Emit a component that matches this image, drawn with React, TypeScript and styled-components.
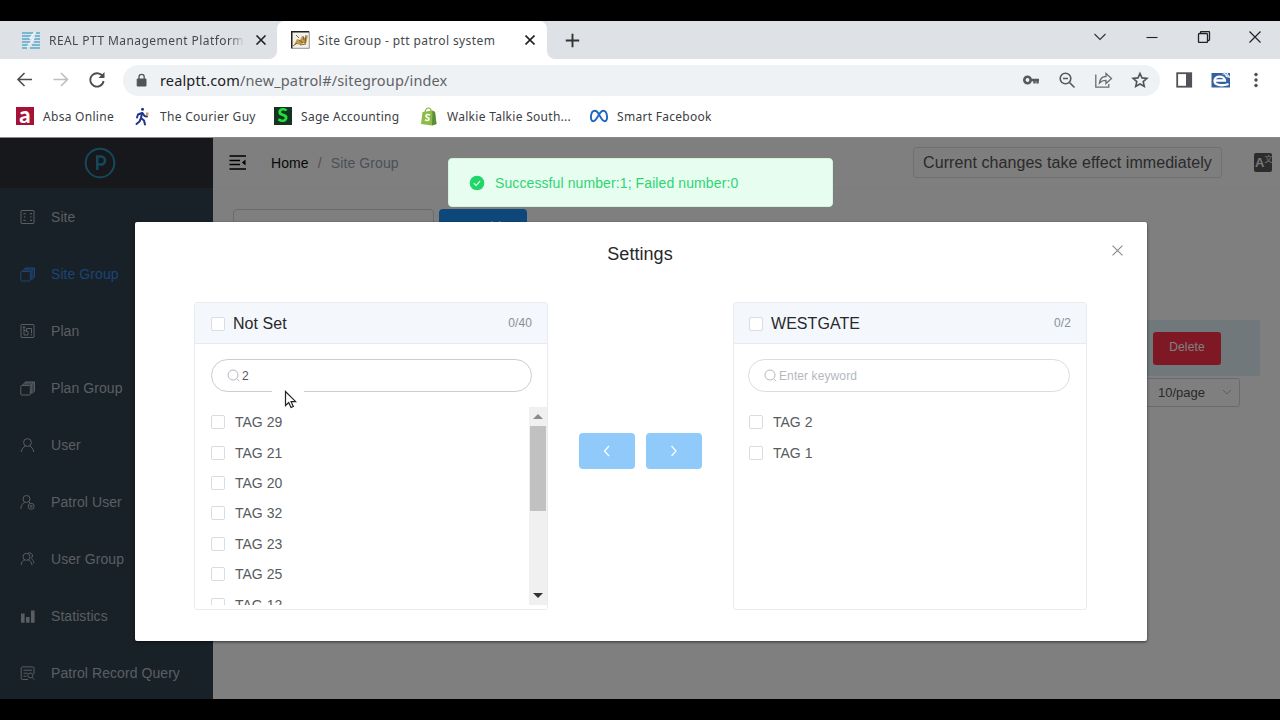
import React from "react";
import styled, { createGlobalStyle, css } from "styled-components";

const GlobalStyle = createGlobalStyle`
  * { box-sizing: border-box; }
  body { margin: 0; background: #000; font-family: "Liberation Sans", Arial, sans-serif; }
  svg { display: block; flex: none; }
`;

const Screen = styled.div`
  width: 1280px; height: 720px; background: #000; padding: 21px 0; overflow: hidden;
`;
const Browser = styled.div`
  height: 678px; display: flex; flex-direction: column; background: #fff;
  font-family: "Noto Sans", "Open Sans", sans-serif; overflow: hidden;
`;

/* ---------- browser chrome ---------- */
const TabStrip = styled.div`
  height: 38px; flex: none; display: flex; background: #fff;
`;
const Tab = styled.div<{ $active?: boolean }>`
  display: flex; align-items: center; color: #45494d;
  width: ${p => (p.$active ? 270 : 277)}px; height: 38px;
  padding-left: ${p => (p.$active ? 14 : 21)}px;
  background: ${p => (p.$active ? "#fff" : "#dee1e5")};
  border-radius: ${p => (p.$active ? "8px 8px 0 0" : "0 0 8px 0")};
`;
const ActiveBack = styled.div`
  background: linear-gradient(#dee1e5 50%, #fff 50%);
`;
const TabTitle = styled.span<{ $w: number; $fade?: boolean; $ls?: number }>`
  width: ${p => p.$w}px; margin-left: 8px; font-size: 12px; line-height: 20px; padding-top: 1px; white-space: nowrap; overflow: hidden;
  letter-spacing: ${p => p.$ls ?? 0}px;
  ${p => p.$fade && css`mask-image: linear-gradient(90deg, #000 92%, transparent);`}
`;
const StripRest = styled.div`
  flex: 1; background: #dee1e5; border-radius: 0 0 0 8px; display: flex; align-items: center; padding: 0 18px 0 18px;
`;
const WindowButtons = styled.div`
  margin-left: auto; display: flex; align-items: center; gap: 37px; padding-bottom: 6px;
`;
const Toolbar = styled.div`
  height: 42px; flex: none; display: flex; align-items: center; padding: 0 16px; 
`;
const NavButtons = styled.div`
  display: flex; align-items: center; gap: 18px; width: 107px;
`;
const AddressBar = styled.div`
  width: 1037px; height: 31px; border-radius: 16px; background: #eff2f4; display: flex; align-items: center;
  padding: 0 11px 0 11px;
`;
const Url = styled.span`
  margin-left: 11px; font-size: 14.5px; letter-spacing: 0.15px; line-height: 24px; color: #5f6368;
  b { font-weight: 400; color: #202124; }
`;
const AddressIcons = styled.div`
  margin-left: auto; display: flex; align-items: center; gap: 18px;
`;
const ToolbarEnd = styled.div`
  display: flex; align-items: center; gap: 17px; margin-left: 14px;
`;
const Bookmarks = styled.div`
  height: 36px; flex: none; display: flex; align-items: center; padding: 0 0 6px 16px; color: #3c4043;
`;
const Bookmark = styled.div<{ $w: number }>`
  display: flex; align-items: center; gap: 9px; width: ${p => p.$w}px; font-size: 12px; letter-spacing: 0.29px; line-height: 20px; white-space: nowrap;
  span + span, svg + span { padding-top: 1px; }
`;
const LetterTile = styled.span<{ $bg: string; $color: string; $size: number }>`
  width: 18px; height: 18px; background: ${p => p.$bg}; color: ${p => p.$color};
  font: 900 ${p => p.$size}px/16px "Lato", sans-serif; text-align: center;
`;

/* ---------- web page ---------- */
const Page = styled.div`
  flex: 1; position: relative; display: flex; overflow: hidden; border-top: 1px solid #8a8a8a;
  font-family: "Liberation Sans", Arial, sans-serif; background: #fff;
`;
const Sidebar = styled.nav`
  width: 213px; background: #304150; flex: none;
`;
const Logo = styled.div`
  height: 50px; background: #2d3036; display: flex; align-items: center; padding-left: 84px;
`;
const MenuItem = styled.div<{ $active?: boolean }>`
  height: 57px; display: flex; align-items: center; gap: 15px; padding: 1px 0 0 20px;
  font-size: 14px; letter-spacing: 0.07px; color: ${p => (p.$active ? "#3a88e4" : "#b4bcc5")};
`;
const Main = styled.main`
  flex: 1; display: flex; flex-direction: column;
`;
const TopBar = styled.header`
  height: 50px; display: flex; align-items: center; padding: 0 8px 0 16px; border-bottom: 1px solid #f9f9f9;
`;
const Crumbs = styled.div`
  display: flex; gap: 9px; margin-left: 24px; font-size: 14px; color: #97a0b0; letter-spacing: 0.1px;
  b { font-weight: 400; color: #111; }
`;
const Notice = styled.div`
  margin-left: auto; margin-right: 32px; height: 31px; width: 309px; border: 1px solid #e0e1e4; border-radius: 3px;
  background: #fcfcfc; font-size: 16px; letter-spacing: 0.07px; line-height: 29px; text-align: center; color: #555; white-space: nowrap;
`;
const Lang = styled.div`
  width: 18px; height: 19px; border-radius: 2px; background: #58585a; color: #eee; font-size: 13px; font-weight: 700; line-height: 20px; 
  padding-left: 1px; display: flex;
  small { font: 8px/12px "Noto Sans CJK SC", sans-serif; }
`;
const FilterRow = styled.div`
  display: flex; gap: 5px; padding: 21px 0 0 20px;
`;
const FilterInput = styled.div`
  width: 201px; height: 36px; border: 1px solid #d4d7df; border-radius: 4px; 
`;
const AddButton = styled.div`
  width: 88px; height: 36px; border-radius: 4px; background: #1c90f6; color: #fff; font-size: 14px; line-height: 36px; text-align: center;
`;
const TableRow = styled.div`
  height: 56px; margin: 75px 20px 0; background: #e0f0f8; display: flex; align-items: center; justify-content: flex-end; padding-right: 39px;
`;
const DeleteButton = styled.div`
  width: 68px; height: 33px; border-radius: 3px; background: #fd3049; color: #fff; font-size: 12px; letter-spacing: 0.15px; line-height: 31px; text-align: center;
`;
const Pager = styled.div`
  margin: 2px 40px 0 auto; width: 110px; height: 29px; border: 1px solid #d4d7df; border-radius: 3px; display: flex;
  align-items: center; justify-content: flex-end; gap: 17px; padding: 0 7px 1px 0; font-size: 13px; color: #505358;
`;
const Overlay = styled.div`
  position: absolute; inset: 0; background: rgba(0, 0, 0, 0.5);
`;
const Dialog = styled.section`
  position: absolute; left: 135px; top: 84px; width: 1012px; height: 419px; background: #fff; border-radius: 2px;
  box-shadow: 0 1px 3px rgba(0, 0, 0, 0.6);
`;
const DialogHead = styled.div`
  height: 80px; display: grid; grid-template-columns: 1fr auto 1fr; padding: 22px 24px 0 22px; font-size: 18px; letter-spacing: 0.05px; line-height: 21px; color: #26282b;
  svg { justify-self: end; grid-column: 3; margin-top: 1px; }
  span { grid-column: 2; }
`;
const Transfer = styled.div`
  display: flex; padding-left: 59px; 
`;
const Panel = styled.div`
  width: 354px; height: 308px; border: 1px solid #e8ecef; border-radius: 3px; overflow: hidden;
`;
const PanelHead = styled.div<{ $left?: number }>`
  height: 41px; background: #f4f7fb; border-bottom: 1px solid #e6ebf0; display: flex; align-items: center; padding: 1px 15px 0 ${p => p.$left ?? 16}px;
  color: #28292c; font-size: 16px; letter-spacing: 0.05px;
  small { margin-left: auto; font-size: 12px; letter-spacing: 0.1px; color: #8b8f95; padding-bottom: 2px; }
`;
const Check = styled.i<{ $gap?: number }>`
  width: 14px; height: 14px; border: 1px solid #d9dce2; border-radius: 2px; background: #fff; margin-right: ${p => p.$gap ?? 10}px; flex: none;
`;
const Search = styled.div<{ $filled?: boolean; $left?: number }>`
  margin: 15px 0 15px ${p => p.$left ?? 14}px; width: ${p => (p.$filled ? 321 : 322)}px; height: 33px; border: 1px solid ${p => (p.$filled ? "#c9cbd0" : "#d9dce1")}; border-radius: 17px;
  display: flex; align-items: center; gap: 2px; padding-left: 15px; font-size: 12px; letter-spacing: 0.1px; color: ${p => (p.$filled ? "#55585d" : "#b4b8be")};
`;
const ListArea = styled.div`
  height: 198px; display: flex; overflow: hidden; 
`;
const List = styled.div`
  flex: 1;
`;
const Item = styled.div<{ $left?: number }>`
  height: 30.4px; display: flex; align-items: center; padding-left: ${p => p.$left ?? 16}px; font-size: 14px; color: #585b60;
`;
const Scrollbar = styled.div`
  width: 18px; background: #f0f0f0; display: flex; flex-direction: column; align-items: center;
`;
const ScrollArrow = styled.div<{ $down?: boolean }>`
  height: 19px; width: 18px; display: flex; align-items: center; justify-content: center;
  &::after {
    content: ""; border: 5px solid transparent;
    ${p => p.$down ? css`border-top-color: #333; border-bottom: 0;` : css`border-bottom-color: #8c8c8c; border-top: 0;`}
  }
`;
const Thumb = styled.div`
  width: 16px; height: 85px; background: #c1c1c1; margin-bottom: auto;
`;
const Moves = styled.div`
  width: 185px; display: flex; gap: 11px; padding: 131px 0 0 31px;
`;
const MoveButton = styled.div`
  width: 56px; height: 36px; border-radius: 4px; background: #8fcafb; display: flex; align-items: center; justify-content: center;
`;
const Toast = styled.div`
  position: absolute; left: 448px; top: 20px; width: 385px; height: 49px; border: 1px solid #d3f5e0; border-radius: 4px; background: #e7fdf0;
  display: flex; align-items: center; gap: 10px; padding-left: 20px; font-size: 14px; letter-spacing: 0.1px; color: #2ed573;
`;
const Pointer = styled.div`
  position: absolute; left: 272px; top: 247px; width: 32px; height: 25px; background: #fff; padding: 5px 0 0 12px;
`;

type Kind = "site" | "group" | "plan" | "user" | "patrol" | "users" | "stats" | "record";
function MenuIcon({ kind }: { kind: Kind }) {
  const shape: Record<Kind, React.ReactNode> = {
    site: <><rect x="1" y="1.500" width="13" height="13" rx=".5" /><g fill="currentColor" stroke="none"><path d="M3.500 4h2v1.300h-2zM10 4h2v1.300h-2zM3.500 10.700h2V12h-2zM10 10.700h2V12h-2zM4 7.300h1.300v1.300H4zM10.200 7.300h1.300v1.300h-1.300z" /></g></>,
    group: <><rect x=".8" y="5.500" width="9.500" height="9.500" rx=".8" /><path d="M3 5.500V4h8.700v9h-1.400M5 4V2h9.500v9.300l-2.800 2.200M5.500 2.800h8M13 3.500v8.500M10.300 6l4-4" /></>,
    plan: <><rect x="1" y="1.500" width="13" height="13" rx=".5" /><path d="M4 3.500v8.500h4V8.500H6.500V5.500h5v5M4 7.500h2.500M10.500 12H12M3 5l1-1.500L5 5" /></>,
    user: <><circle cx="7.500" cy="5.500" r="3.900" /><path d="M1.200 15C1.700 11.800 3.700 9.700 5.500 9.100M13.800 15C13.300 11.800 11.300 9.700 9.500 9.100" /></>,
    patrol: <><circle cx="6.500" cy="5" r="3.500" /><path d="M.8 15c.2-3.500 1.800-5.800 4-6.500M9 8.300l1 .5" /><circle cx="11.200" cy="12.300" r="3" /><circle cx="11.200" cy="12.300" r="1" /></>,
    users: <><circle cx="6.500" cy="5.800" r="3.500" /><path d="M1 14c.4-3 2-4.500 3.800-5M12 14c-.4-3-2-4.500-3.800-5M8 2.200c3.500-1.400 6 2 3.300 5.200 1.500 1.200 2.500 2.800 2.600 4.800" /></>,
    stats: <g fill="currentColor" stroke="none"><path d="M1 5.500h3.600v9.300H1zM6 9h3.600v5.800H6zM11 2.500h3.600v12.300H11z" /></g>,
    record: <><path d="M14 9V3.200a1.300 1.300 0 0 0-1.300-1.300H2.500a1.300 1.300 0 0 0-1.300 1.300v10a1.300 1.300 0 0 0 1.300 1.300H8M3.500 5.200h8.500M3.500 8.200h4M3.500 11.200h3" /><circle cx="10.300" cy="10.500" r="2.500" /><path d="M12.200 12.500l2 2.200" /></>,
  };
  return <svg width="16" height="16" viewBox="0 0 16 16" fill="none" stroke="currentColor" strokeWidth="1">{shape[kind]}</svg>;
}

const Lens = () => (
  <svg width="13" height="13" viewBox="0 0 13 13" fill="none" stroke="#b4b8be" strokeWidth="1"><circle cx="6" cy="6" r="5" /><path d="M9.600 9.800l2.600 2.400" /></svg>
);
const Cross = ({ size, width = 1.5, color = "#222" }: { size: number; width?: number; color?: string }) => (
  <svg width={size} height={size} viewBox="0 0 10 10" fill="none" stroke={color} strokeWidth={(width * 10) / size}><path d="M.5.5l9 9M9.500.5l-9 9" /></svg>
);

const menu: [Kind, string][] = [
  ["site", "Site"], ["group", "Site Group"], ["plan", "Plan"], ["group", "Plan Group"], ["user", "User"],
  ["patrol", "Patrol User"], ["users", "User Group"], ["stats", "Statistics"], ["record", "Patrol Record Query"],
];
const notSet = ["TAG 29", "TAG 21", "TAG 20", "TAG 32", "TAG 23", "TAG 25", "TAG 12"];
const assigned = ["TAG 2", "TAG 1"];

export default function App() {
  return (
    <Screen>
      <GlobalStyle />
      <Browser>
        <TabStrip>
          <Tab>
            <svg width="20" height="18" viewBox="0 0 20 18" fill="none" stroke="#5aa9cc" strokeWidth="1.700">
              <path d="M1 2h11.500M15 2h4M1 5h10M14 5h5M1 8h8M13 8h6M1 11h9M13 11h6M1 14h7M11 14h8M1 17h5M9 17h10" />
              <path d="M14 1l-5 6h4l-7 9" stroke="#eef8fc" strokeWidth="1.200" />
            </svg>
            <TabTitle $w={196} $fade $ls={0.43}>REAL PTT Management Platform</TabTitle>
            <svg width="32" height="10" viewBox="0 0 32 10" stroke="#222" strokeWidth="1.600"><path d="M11.500.5l9 9M20.500.5l-9 9" /></svg>
          </Tab>
          <ActiveBack>
            <Tab $active>
              <svg width="19" height="18" viewBox="0 0 19 18">
                <rect x=".75" y=".75" width="17.500" height="16.500" fill="#f3f0ea" />
                <path d="M.75 17.500V.75h17.500" fill="none" stroke="#222" strokeWidth="1.500" /><path d="M1 17.300h17.300V1" fill="none" stroke="#777" strokeWidth=".8" />
                <path d="M3 14l3-6 3 1 2-4 2 2 4-3-1 5-1 4-3-1-3 2-3-1z" fill="#c49a45" />
                <path d="M2 15l4-3M8 9l4 3M12 5l1 4M15 4l-1 8M5 4l3 3M9 14l6-1" stroke="#5c4a2d" strokeWidth=".8" />
              </svg>
              <TabTitle $w={207} $ls={0.4}>Site Group - ptt patrol system</TabTitle>
              <Cross size={10} width={1.6} />
            </Tab>
          </ActiveBack>
          <StripRest>
            <svg width="15" height="15" viewBox="0 0 15 15" stroke="#333" strokeWidth="1.900"><path d="M7.500.8v13.400M.8 7.500h13.400" /></svg>
            <WindowButtons>
              <svg width="14" height="8" viewBox="0 0 14 8" fill="none" stroke="#333" strokeWidth="1.100"><path d="M1.500 1l5.500 5.500L12.500 1" /></svg>
              <svg width="16" height="12" viewBox="0 0 16 12" stroke="#222" strokeWidth="1.100"><path d="M2.500 6.500h11" /></svg>
              <svg width="14" height="12" viewBox="0 0 14 12" fill="none" stroke="#222" strokeWidth="1.300"><rect x="1.500" y="2.500" width="9" height="9" rx="1" /><path d="M3.500 2.500V1.500a1 1 0 0 1 1-1h7a1 1 0 0 1 1 1v7a1 1 0 0 1-1 1h-1" /></svg>
              <svg width="14" height="12" viewBox="0 0 14 12" stroke="#222" strokeWidth="1.200"><path d="M1.500.5l11 11M12.500.5l-11 11" /></svg>
            </WindowButtons>
          </StripRest>
        </TabStrip>

        <Toolbar>
          <NavButtons>
            <svg width="18" height="16" viewBox="0 0 18 16" fill="none" stroke="#4a4d51" strokeWidth="1.600"><path d="M16 7.500H2M8.500 1L2 7.500 8.500 14" /></svg>
            <svg width="18" height="16" viewBox="0 0 18 16" fill="none" stroke="#bcbfc2" strokeWidth="1.600"><path d="M1.500 7.500h14M9 1l6.500 6.500L9 14" /></svg>
            <svg width="18" height="18" viewBox="0 0 18 18" fill="none" stroke="#4a4d51" strokeWidth="1.800"><path d="M15 6A6.700 6.700 0 1 0 15.600 10" /><path d="M16.500 1v6h-6z" fill="#4a4d51" stroke="none" /></svg>
          </NavButtons>
          <AddressBar>
            <svg width="15" height="16" viewBox="0 0 15 16"><path d="M3.200 7h8.800v7H3.200z" fill="#505458" stroke="#505458" strokeLinejoin="round" strokeWidth="1" /><path d="M5 7V5a2.600 2.600 0 0 1 5.200 0v2" fill="none" stroke="#505458" strokeWidth="1.300" /></svg>
            <Url><b>realptt.com</b>/new_patrol#/sitegroup/index</Url>
            <AddressIcons>
              <svg width="18" height="18" viewBox="0 0 18 18" fill="none" stroke="#55595d"><circle cx="5.500" cy="9" r="3.200" strokeWidth="2.600" /><path d="M9 9h8M12.500 9v3.500M15.500 9v3.500" strokeWidth="2.400" /></svg>
              <svg width="18" height="18" viewBox="0 0 18 18" fill="none" stroke="#55595d" strokeWidth="1.600"><circle cx="7.500" cy="7.500" r="5.300" /><path d="M11.500 11.500l5 5M5 7.500h5" /></svg>
              <svg width="19" height="18" viewBox="0 0 19 18" fill="none" stroke="#686c70" strokeWidth="1.300"><path d="M1.800 3.500v12.700h13V13M5.500 12c.5-4 2.500-6.500 6.500-6.500v-3l5.500 5-5.500 5V9.400C9 9.400 7 10.300 5.500 12z" /></svg>
              <svg width="18" height="18" viewBox="0 0 18 18" fill="none" stroke="#505458" strokeWidth="1.600"><path d="M9 2.500l2 4.400 4.900.5-3.700 3.200 1.100 4.900L9 13l-4.300 2.500 1.100-4.900-3.700-3.200 4.900-.5z" /></svg>
            </AddressIcons>
          </AddressBar>
          <ToolbarEnd>
            <svg width="20" height="18" viewBox="0 0 20 18"><rect x="3.200" y="2.200" width="14" height="13.500" fill="none" stroke="#505458" strokeWidth="1.800" /><path d="M12 2h5.500v14H12z" fill="#505458" /></svg>
            <svg width="20" height="18" viewBox="0 0 20 18" fill="none"><path d="M.5 2h18.500v14.500H.5z" fill="#33619f" /><path d="M3.500 9.500h10.500c-.3-5-10.500-5.300-10.500.3 0 5.500 9 5 14 3.200" stroke="#fff" strokeWidth="2.300" /><path d="M11.500 3c4-.5 6 1 7 3M13 1c1 3 3 5 6 5.500M17 1l-2 5" stroke="#dbe9f7" strokeWidth="1.200" /></svg>
            <svg width="16" height="18" viewBox="0 0 16 18" fill="#4a4d51"><circle cx="8" cy="3.500" r="1.700" /><circle cx="8" cy="9" r="1.700" /><circle cx="8" cy="14.500" r="1.700" /></svg>
          </ToolbarEnd>
        </Toolbar>

        <Bookmarks>
          <Bookmark $w={117}><LetterTile $bg="#a51236" $color="#fff" $size={22}>a</LetterTile><span>Absa Online</span></Bookmark>
          <Bookmark $w={141}>
            <svg width="18" height="19" viewBox="0 0 18 19" fill="none" stroke="#24368c" strokeWidth="2" strokeLinecap="round" strokeLinejoin="round"><circle cx="9.500" cy="2.200" r="1.500" fill="#24368c" stroke="none" /><path d="M9 6l-1 5 3 2.500 1 4M8 11l-1.500 3.500L3.500 17M9 6L5 7.500 4 10.500M9.500 6l2 3 2.500.5" /><path d="M13 5.500h2.500v3H13z" fill="#d69a6b" stroke="none" /></svg>
            <span>The Courier Guy</span>
          </Bookmark>
          <Bookmark $w={146}><LetterTile $bg="#143320" $color="#21e03c" $size={19}>S</LetterTile><span>Sage Accounting</span></Bookmark>
          <Bookmark $w={170}>
            <svg width="18" height="19" viewBox="0 0 18 19"><path d="M2.500 5l10-1.500 2.500 1.500 1.500 12-4.500 1.500L1 17z" fill="#8bbd45" /><path d="M12.500 3.500l2.500 1.500 1.500 12-4.500 1.500z" fill="#5b8e3a" /><path d="M5 5c.5-3 2-4 3.500-4s2.500 1 2.700 3" fill="none" stroke="#83b340" strokeWidth="1.200" /><path d="M10 8c-2-1-4-.5-4 1s3 1.500 3 3-2 2-4 .8" fill="none" stroke="#fff" strokeWidth="1.600" /></svg>
            <span>Walkie Talkie South...</span>
          </Bookmark>
          <Bookmark $w={140}>
            <svg width="18" height="14" viewBox="0 0 19 14" fill="none" stroke="#1d67c1" strokeWidth="2"><path d="M9.500 5.500C8 2.500 6.500 1.500 5 1.500c-4.500 0-5.500 11-1.500 11 2.500 0 4-4 6-7s3-4 4.500-4c4.500 0 5.500 11 1.500 11-2.500 0-4-4-6-7" /></svg>
            <span>Smart Facebook</span>
          </Bookmark>
        </Bookmarks>

        <Page>
          <Sidebar>
            <Logo>
              <svg width="32" height="32" viewBox="0 0 32 32" fill="none" stroke="#2c90b8"><circle cx="16" cy="16" r="14.300" strokeWidth="2" /><path d="M13.200 23V9.500h3.800a4 4 0 0 1 0 8h-3.800" strokeWidth="2.500" /></svg>
            </Logo>
            {menu.map(([kind, label]) => (
              <MenuItem key={label} $active={label === "Site Group"}><MenuIcon kind={kind} /><span>{label}</span></MenuItem>
            ))}
          </Sidebar>
          <Main>
            <TopBar>
              <svg width="18" height="16" viewBox="0 0 18 16" stroke="#000" strokeWidth="1.700"><path d="M.5 1h16.500M.5 5.500h10.500M.5 9.500h10.500M.5 14h16.500" /><path d="M16.500 4.500v6l-3.500-3z" fill="#000" stroke="none" /></svg>
              <Crumbs><b>Home</b><span>/</span><span>Site Group</span></Crumbs>
              <Notice>Current changes take effect immediately</Notice>
              <Lang>A<small>文</small></Lang>
            </TopBar>
            <FilterRow><FilterInput /><AddButton>+ Add</AddButton></FilterRow>
            <TableRow><DeleteButton>Delete</DeleteButton></TableRow>
            <Pager>10/page<svg width="10" height="7" viewBox="0 0 10 7" fill="none" stroke="#b4b8be"><path d="M1 1l4 4 4-4" /></svg></Pager>
          </Main>
          <Overlay />
          <Dialog>
            <DialogHead><span>Settings</span><Cross size={11} width={1.1} color="#85888d" /></DialogHead>
            <Transfer>
              <Panel>
                <PanelHead><Check $gap={8} />Not Set<small>0/40</small></PanelHead>
                <Search $filled $left={16}><Lens />2</Search>
                <ListArea>
                  <List>{notSet.map(t => <Item key={t}><Check />{t}</Item>)}</List>
                  <Scrollbar><ScrollArrow /><Thumb /><ScrollArrow $down /></Scrollbar>
                </ListArea>
              </Panel>
              <Moves>
                <MoveButton><svg width="8" height="12" viewBox="0 0 8 12" fill="none" stroke="#fff" strokeWidth="1.200"><path d="M6 1L1.500 6 6 11" /></svg></MoveButton>
                <MoveButton><svg width="8" height="12" viewBox="0 0 8 12" fill="none" stroke="#fff" strokeWidth="1.200"><path d="M1.500 1L6 6l-4.500 5" /></svg></MoveButton>
              </Moves>
              <Panel>
                <PanelHead $left={15}><Check $gap={8} />WESTGATE<small>0/2</small></PanelHead>
                <Search><Lens />Enter keyword</Search>
                <ListArea><List>{assigned.map(t => <Item key={t} $left={15}><Check />{t}</Item>)}</List></ListArea>
              </Panel>
            </Transfer>
          </Dialog>
          <Toast>
            <svg width="16" height="16" viewBox="0 0 16 16"><circle cx="8" cy="8" r="7.300" fill="#1fd768" /><path d="M4.800 8.200l2.300 2.200 4-4.300" fill="none" stroke="#e7fdf0" strokeWidth="1.200" /></svg>
            Successful number:1; Failed number:0
          </Toast>
          <Pointer>
            <svg width="13" height="19" viewBox="0 0 13 19"><path d="M1.500 1.500v14l3.200-3 2.300 5 2.300-1-2.200-4.800h4.600z" fill="#fff" stroke="#222" strokeWidth="1.200" /></svg>
          </Pointer>
        </Page>
      </Browser>
    </Screen>
  );
}
